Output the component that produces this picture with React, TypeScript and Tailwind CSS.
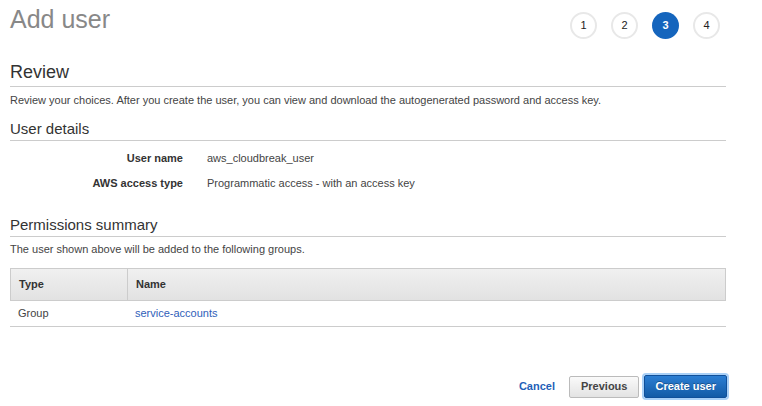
const steps = [1, 2, 3, 4]

const details = [
  { label: "User name", value: "aws_cloudbreak_user" },
  { label: "AWS access type", value: "Programmatic access - with an access key" },
]

const App = () => {
  return (
    <div className="min-h-[406px] bg-white pl-[10px] text-[#444] font-['Liberation_Sans',Arial,sans-serif]">
      <div className="w-[716px]">
        <div className="h-[61px] flex justify-between items-start">
          <h1 className="pt-[4px] text-[25px] leading-[30px] text-[#888]">Add user</h1>
          <div className="flex gap-[14px] mt-[12px] mr-[6px]">
            {steps.map((s) => (
              <div
                key={s}
                className={
                  s === 3
                    ? "w-[27px] h-[27px] rounded-full bg-[#1565bd] text-white font-bold text-[11px] flex items-center justify-center"
                    : "w-[27px] h-[27px] rounded-full border-2 border-[#e8e8e8] bg-white text-[#222] text-[11px] flex items-center justify-center"
                }
              >
                {s}
              </div>
            ))}
          </div>
        </div>

        <h2 className="text-[18px] leading-[22px] pb-[3px] border-b border-[#ccc] text-[#333]">Review</h2>
        <p className="mt-[5px] text-[11px] leading-[16px]">
          Review your choices. After you create the user, you can view and download the autogenerated password and access key.
        </p>

        <h3 className="mt-[12px] text-[15px] leading-[18px] pb-[2px] border-b border-[#ccc] text-[#333]">User details</h3>
        <div className="mt-[9px] flex flex-col gap-[9px] text-[11px] leading-[16px]">
          {details.map((d) => (
            <div key={d.label} className="flex gap-[24px]">
              <div className="w-[173px] text-right font-bold text-[#333]">{d.label}</div>
              <div>{d.value}</div>
            </div>
          ))}
        </div>

        <h3 className="mt-[25px] text-[15px] leading-[18px] pb-[2px] border-b border-[#ccc] text-[#333]">Permissions summary</h3>
        <p className="mt-[4px] text-[11px] leading-[16px]">The user shown above will be added to the following groups.</p>

        <div className="mt-[11px] text-[11px]">
          <div className="grid grid-cols-[117px_1fr] h-[33px] border border-[#ccc] bg-gradient-to-b from-[#f0f0f0] to-[#e2e2e2] font-bold text-[#333]">
            <div className="flex items-center px-[8px] border-r border-[#ccc]">Type</div>
            <div className="flex items-center px-[8px]">Name</div>
          </div>
          <div className="grid grid-cols-[117px_1fr] h-[26px] border-b border-[#ccc]">
            <div className="flex items-center px-[8px]">Group</div>
            <div className="flex items-center px-[8px]">
              <a href="#" className="text-[#2f60b9]">service-accounts</a>
            </div>
          </div>
        </div>

        <div className="mt-[48px] flex justify-end items-center mr-[-1px] text-[11px] font-bold">
          <a href="#" className="text-[#1f5fb8] mr-[14px]">Cancel</a>
          <button className="h-[22px] px-[11px] rounded-[2px] border border-[#bbb] bg-gradient-to-b from-[#fafafa] to-[#e3e3e3] text-[#444]">
            Previous
          </button>
          <button className="ml-[5px] h-[23px] px-[10px] rounded-[2px] border border-[#10509a] bg-gradient-to-b from-[#2b7ed3] to-[#135ba6] text-white ring-2 ring-[#a9d0f7] [text-shadow:0_-1px_0_rgba(0,0,0,0.3)]">
            Create user
          </button>
        </div>
      </div>
    </div>
  )
}

export default App
